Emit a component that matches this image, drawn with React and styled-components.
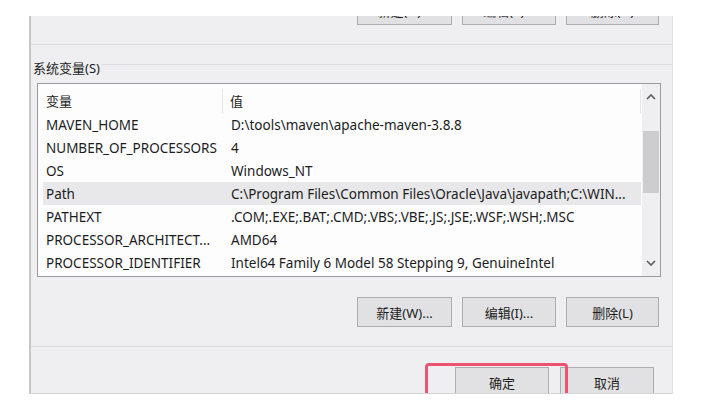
import React from 'react'
import styled, { createGlobalStyle } from 'styled-components';

const GlobalStyle = createGlobalStyle`
  html, body {
    margin: 0;
    padding: 0;
    background: #ffffff;
  }
  body {
    font-family: "Noto Sans", "Noto Sans CJK SC", sans-serif;
    font-size: 13px;
    color: #1c1c1c;
  }
`;

const Page = styled.div`
  padding: 16px 0 0 29px;
`;

const Dialog = styled.div`
  width: 641px;
  height: 377px;
  background: #efeff1;
  border-left: 2px solid #c6c6c8;
  border-right: 1px solid #e2e2e4;
  border-bottom: 1px solid #d4d4d6;
  overflow: hidden;
  display: flex;
  flex-direction: column;

  & > * {
    flex-shrink: 0;
  }
`;

const ButtonRow = styled.div`
  display: flex;
  justify-content: flex-end;
  gap: ${p => p.$gap || 10}px;
  padding-right: ${p => p.$right || 13}px;
  margin-top: ${p => p.$top || 0}px;
`;

const Button = styled.div`
  width: ${p => p.$w || 94}px;
  height: 30px;
  box-sizing: border-box;
  background: #e1e1e3;
  border: 1px solid #adadaf;
  display: flex;
  align-items: center;
  justify-content: center;
  font-size: 13px;
  color: #1c1c1c;
  flex-shrink: 0;
`;

const Separator = styled.div`
  height: 1px;
  background: #dadadc;
  margin-top: ${p => p.$top}px;
`;

const GroupHeader = styled.div`
  display: flex;
  align-items: center;
  margin-top: 15px;
  padding-left: 2px;
  height: 16px;
`;

const GroupLabel = styled.span`
  font-size: 13px;
  line-height: 16px;
  padding-right: 2px;
`;

const GroupLine = styled.div`
  flex: 1;
  height: 1px;
  background: #dcdcde;
  margin-top: -7px;
`;

const ListBox = styled.div`
  margin: 7px 11px 0 6px;
  height: 194px;
  box-sizing: border-box;
  border: 1px solid #9c9c9e;
  background: #fdfdfe;
  display: flex;
  font-size: 13.5px;
`;

const Table = styled.div`
  flex: 1;
  padding-left: 5px;
  padding-right: 1px;
  min-width: 0;
`;

const HeaderRow = styled.div`
  display: flex;
  height: 29px;
  align-items: center;
`;

const HeaderCell = styled.div`
  width: ${p => p.$w ? p.$w + 'px' : 'auto'};
  flex: ${p => p.$w ? 'none' : 1};
  box-sizing: border-box;
  padding-left: ${p => p.$pad}px;
  height: 24px;
  line-height: 24px;
  margin-top: 4px;
  border-right: 1px solid #e6e6e8;
  font-size: 13px;
`;

const Row = styled.div`
  display: flex;
  height: 23px;
  align-items: center;
  background: ${p => p.$selected ? '#e8e8ea' : 'transparent'};
`;

const Cell = styled.div`
  width: ${p => p.$w ? p.$w + 'px' : 'auto'};
  flex: ${p => p.$w ? 'none' : 1};
  padding-left: ${p => p.$pad}px;
  box-sizing: border-box;
  white-space: nowrap;
  overflow: hidden;
`;

const ScrollBar = styled.div`
  width: 18px;
  background: #efeff1;
  display: flex;
  flex-direction: column;
`;

const ScrollArrow = styled.div`
  height: 26px;
  display: flex;
  align-items: center;
  justify-content: center;
`;

const ScrollTrack = styled.div`
  flex: 1;
  padding-top: 21px;
`;

const ScrollThumb = styled.div`
  height: 62px;
  margin: 0 1px;
  background: #cdcdcf;
`;

const OkWrap = styled.div`
  position: relative;
`;

const Highlight = styled.div`
  position: absolute;
  left: -30px;
  top: -4px;
  width: 143px;
  height: 44px;
  box-sizing: border-box;
  border: 3px solid #ea5470;
  border-radius: 4px;
  pointer-events: none;
`;

const Chevron = ({ up }) => (
  <svg width="10" height="6" viewBox="0 0 10 6">
    <path
      d={up ? 'M1 5 L5 1 L9 5' : 'M1 1 L5 5 L9 1'}
      fill="none"
      stroke="#5a5a5a"
      strokeWidth="1.6"
    />
  </svg>
);

const rows = [
  ['MAVEN_HOME', 'D:\\tools\\maven\\apache-maven-3.8.8'],
  ['NUMBER_OF_PROCESSORS', '4'],
  ['OS', 'Windows_NT'],
  ['Path', 'C:\\Program Files\\Common Files\\Oracle\\Java\\javapath;C:\\WIN...'],
  ['PATHEXT', '.COM;.EXE;.BAT;.CMD;.VBS;.VBE;.JS;.JSE;.WSF;.WSH;.MSC'],
  ['PROCESSOR_ARCHITECT...', 'AMD64'],
  ['PROCESSOR_IDENTIFIER', 'Intel64 Family 6 Model 58 Stepping 9, GenuineIntel'],
];

const App = () => {
  return (
    <Page>
      <GlobalStyle />
      <Dialog>
        <ButtonRow $top={-21}>
          <Button $w={95}>新建(N)...</Button>
          <Button>编辑(E)...</Button>
          <Button $w={93}>删除(D)</Button>
        </ButtonRow>
        <Separator $top={19} />
        <GroupHeader>
          <GroupLabel>系统变量(S)</GroupLabel>
          <GroupLine />
        </GroupHeader>
        <ListBox>
          <Table>
            <HeaderRow>
              <HeaderCell $w={180} $pad={3}>变量</HeaderCell>
              <HeaderCell $pad={7}>值</HeaderCell>
            </HeaderRow>
            {rows.map(([name, value]) => (
              <Row key={name} $selected={name === 'Path'}>
                <Cell $w={188} $pad={3}>{name}</Cell>
                <Cell $pad={0}>{value}</Cell>
              </Row>
            ))}
          </Table>
          <ScrollBar>
            <ScrollArrow><Chevron up /></ScrollArrow>
            <ScrollTrack><ScrollThumb /></ScrollTrack>
            <ScrollArrow><Chevron /></ScrollArrow>
          </ScrollBar>
        </ListBox>
        <ButtonRow $top={20}>
          <Button $w={95}>新建(W)...</Button>
          <Button>编辑(I)...</Button>
          <Button $w={93}>删除(L)</Button>
        </ButtonRow>
        <Separator $top={19} />
        <ButtonRow $top={20} $gap={11} $right={18}>
          <OkWrap>
            <Button>确定</Button>
            <Highlight />
          </OkWrap>
          <Button>取消</Button>
        </ButtonRow>
      </Dialog>
    </Page>
  )
}

export default App
